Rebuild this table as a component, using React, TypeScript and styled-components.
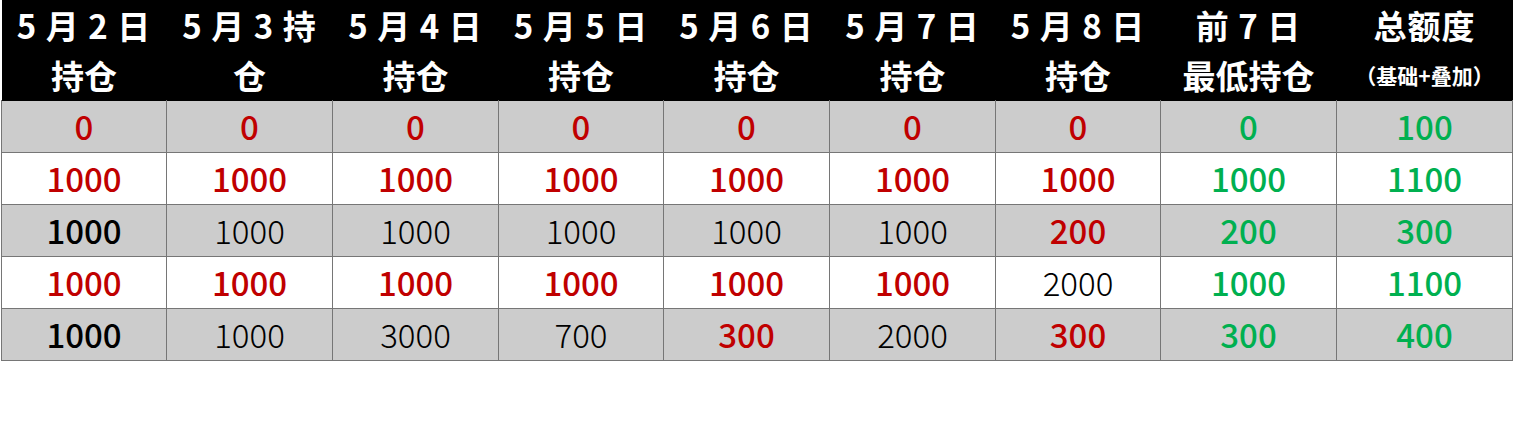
import { createGlobalStyle } from 'styled-components';
import styled from 'styled-components';

const GlobalStyle = createGlobalStyle`
  html, body {
    margin: 0;
    padding: 0;
    background: #ffffff;
  }
  body {
    font-family: "Noto Sans CJK SC", "Noto Sans", sans-serif;
  }
`;

const Sheet = styled.div`
  padding-left: 1px;
`;

const Table = styled.table`
  border-collapse: collapse;
  table-layout: fixed;
  width: 1512px;
`;

const HeadRow = styled.tr`
  height: 100px;
  background: #000000;
  border-bottom: 1px solid #ffffff;
`;

const HeadCell = styled.th`
  padding: 0;
  color: #ffffff;
  font-weight: 700;
  font-size: 33px;
  line-height: 50px;
  text-align: center;
  vertical-align: middle;
  white-space: nowrap;
  overflow: hidden;
`;

const Line = styled.div<{ $spaced?: boolean; $small?: boolean }>`
  letter-spacing: ${(p) => (p.$spaced ? '1px' : '0')};
  font-size: ${(p) => (p.$small ? '21px' : '33px')};
`;

const BodyRow = styled.tr<{ $shade: boolean }>`
  height: 52px;
  background: ${(p) => (p.$shade ? '#cccccc' : '#ffffff')};
  &:first-of-type td {
    border-top: 1px solid #000000;
  }
`;

type Tone = 'red' | 'green' | 'black' | 'plain';

const toneColor: Record<Tone, string> = {
  red: '#c00000',
  green: '#00b050',
  black: '#000000',
  plain: '#000000',
};

const Cell = styled.td<{ $tone: Tone }>`
  padding: 0;
  border: 1px solid #767676;
  text-align: center;
  vertical-align: middle;
  font-size: 33px;
  line-height: 1;
  color: ${(p) => toneColor[p.$tone]};
  font-weight: ${(p) => (p.$tone === 'plain' ? 300 : 500)};
`;

const widths = [165, 166, 166, 165, 166, 166, 165, 176, 176];

const heads: { top: string; bottom: string; small?: boolean }[] = [
  { top: '5 月 2 日', bottom: '持仓' },
  { top: '5 月 3 持', bottom: '仓' },
  { top: '5 月 4 日', bottom: '持仓' },
  { top: '5 月 5 日', bottom: '持仓' },
  { top: '5 月 6 日', bottom: '持仓' },
  { top: '5 月 7 日', bottom: '持仓' },
  { top: '5 月 8 日', bottom: '持仓' },
  { top: '前 7 日', bottom: '最低持仓' },
  { top: '总额度', bottom: '（基础+叠加）', small: true },
];

type Entry = [string, Tone];

const R = (v: string): Entry => [v, 'red'];
const G = (v: string): Entry => [v, 'green'];
const B = (v: string): Entry => [v, 'black'];
const P = (v: string): Entry => [v, 'plain'];

const rows: Entry[][] = [
  [R('0'), R('0'), R('0'), R('0'), R('0'), R('0'), R('0'), G('0'), G('100')],
  [R('1000'), R('1000'), R('1000'), R('1000'), R('1000'), R('1000'), R('1000'), G('1000'), G('1100')],
  [B('1000'), P('1000'), P('1000'), P('1000'), P('1000'), P('1000'), R('200'), G('200'), G('300')],
  [R('1000'), R('1000'), R('1000'), R('1000'), R('1000'), R('1000'), P('2000'), G('1000'), G('1100')],
  [B('1000'), P('1000'), P('3000'), P('700'), R('300'), P('2000'), R('300'), G('300'), G('400')],
];

export default function App() {
  return (
    <>
      <GlobalStyle />
      <Sheet>
        <Table>
          <colgroup>
            {widths.map((w, i) => (
              <col key={i} style={{ width: w }} />
            ))}
          </colgroup>
          <thead>
            <HeadRow>
              {heads.map((h, i) => (
                <HeadCell key={i}>
                  <Line $spaced>{h.top}</Line>
                  <Line $small={h.small}>{h.bottom}</Line>
                </HeadCell>
              ))}
            </HeadRow>
          </thead>
          <tbody>
            {rows.map((row, r) => (
              <BodyRow key={r} $shade={r % 2 === 0}>
                {row.map(([v, tone], c) => (
                  <Cell key={c} $tone={tone}>
                    {v}
                  </Cell>
                ))}
              </BodyRow>
            ))}
          </tbody>
        </Table>
      </Sheet>
    </>
  );
}
